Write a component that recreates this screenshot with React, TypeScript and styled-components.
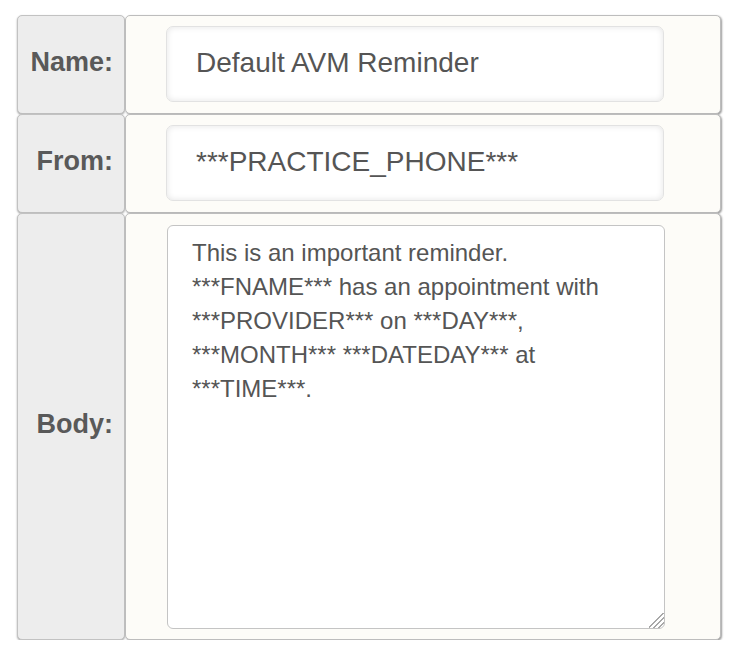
import React, { useState } from 'react';
import styled, { createGlobalStyle } from 'styled-components';

const GlobalStyle = createGlobalStyle`
  html, body {
    margin: 0;
    padding: 0;
    background: #ffffff;
  }
  body {
    font-family: "Liberation Sans", Arial, Helvetica, sans-serif;
    color: #555555;
  }
`;

/* ── Layout ── */

const Page = styled.div`
  padding: 15px 0 0 17px;
`;

const FormGrid = styled.div`
  display: grid;
  grid-template-columns: 108px 596px;
  grid-template-rows: 99px 99px 427px;
`;

const LabelCell = styled.div`
  box-sizing: border-box;
  display: flex;
  align-items: center;
  justify-content: flex-end;
  padding: 0 11px 4px 0;
  background: #ededed;
  border: 1px solid #c2c2c2;
  border-radius: 5px;
  box-shadow: 0 1px 2px rgba(0, 0, 0, 0.35);
  font-size: 27px;
  font-weight: 700;
  color: #595959;
`;

const ValueCell = styled.div<{ $tall?: boolean }>`
  box-sizing: border-box;
  display: flex;
  align-items: ${({ $tall }) => ($tall ? 'stretch' : 'center')};
  padding: 10px 54px 11px 40px;
  background: #fdfcf8;
  border: 1px solid #bdbdbd;
  border-radius: 5px;
  box-shadow: 1px 1px 2px rgba(0, 0, 0, 0.4);
`;

/* ── Form Elements ── */

const TextInput = styled.input`
  box-sizing: border-box;
  flex: none;
  width: 498px;
  height: 76px;
  padding: 0 0 2px 29px;
  background: #ffffff;
  border: 1px solid #e2e2e2;
  border-radius: 7px;
  box-shadow: inset 0 0 6px rgba(0, 0, 0, 0.11);
  font-family: "Liberation Sans", Arial, sans-serif;
  font-size: 28px;
  color: #555555;
  outline: none;
`;

const BodyArea = styled.textarea`
  box-sizing: border-box;
  flex: none;
  width: 498px;
  height: 404px;
  margin: 1px 0 0 1px;
  padding: 10px 24px;
  background: #ffffff;
  border: 1px solid #c4c4c4;
  border-radius: 6px;
  font-family: "Liberation Sans", Arial, sans-serif;
  font-size: 24px;
  line-height: 34px;
  color: #555555;
  resize: both;
  outline: none;

  &::-webkit-resizer {
    background: linear-gradient(
      135deg,
      transparent 0 46%,
      #a8a8a8 46% 52%,
      transparent 52% 62%,
      #a8a8a8 62% 68%,
      transparent 68% 78%,
      #a8a8a8 78% 84%,
      transparent 84%
    );
  }
`;

const initialBody =
  'This is an important reminder. ***FNAME*** has an appointment with ***PROVIDER*** on ***DAY***, ***MONTH*** ***DATEDAY*** at ***TIME***.';

export default function App() {
  const [name, setName] = useState('Default AVM Reminder');
  const [from, setFrom] = useState('***PRACTICE_PHONE***');
  const [body, setBody] = useState(initialBody);

  return (
    <Page>
      <GlobalStyle />
      <FormGrid>
        <LabelCell>Name:</LabelCell>
        <ValueCell>
          <TextInput value={name} onChange={(e) => setName(e.target.value)} />
        </ValueCell>
        <LabelCell>From:</LabelCell>
        <ValueCell>
          <TextInput value={from} onChange={(e) => setFrom(e.target.value)} />
        </ValueCell>
        <LabelCell>Body:</LabelCell>
        <ValueCell $tall>
          <BodyArea value={body} onChange={(e) => setBody(e.target.value)} />
        </ValueCell>
      </FormGrid>
    </Page>
  );
}
